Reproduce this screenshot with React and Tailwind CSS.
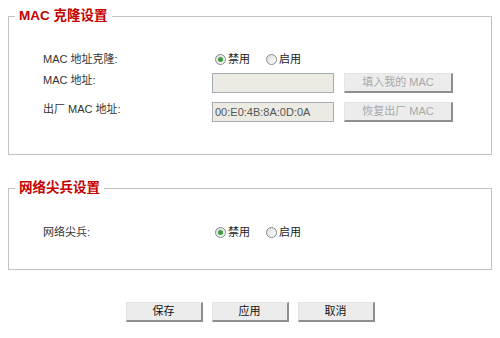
import React from "react";

const font = { fontFamily: '"Liberation Sans", Arial, "Noto Sans CJK SC", sans-serif' };

function Radio({ checked, label }) {
  return (
    <span className="flex items-center">
      <span className="flex h-[11px] w-[11px] items-center justify-center rounded-full border border-[#7f8a94] bg-gradient-to-br from-[#dcdcdc] to-white">
        {checked && <span className="h-[5px] w-[5px] rounded-full bg-[#3a9e3a]" />}
      </span>
      <span className="ml-[2px] text-[11px] leading-[14px] text-[#222]">{label}</span>
    </span>
  );
}

function GrayButton({ children, disabled, className = "" }) {
  return (
    <button
      disabled={disabled}
      className={`flex items-center justify-center border-t border-l border-t-[#e4e4e4] border-l-[#e4e4e4] border-r-2 border-b-2 border-r-[#8e8e8e] border-b-[#8e8e8e] bg-[#ececec] text-[11px] leading-none ${
        disabled ? "text-[#a8a8a8]" : "text-[#111]"
      } ${className}`}
    >
      {children}
    </button>
  );
}

function Section({ title, children, className = "", pt, pb }) {
  return (
    <fieldset className={`mx-2 border border-[#c2c2c2] ${className}`}>
      <legend className="ml-[6px] px-1 text-[13.5px] font-bold leading-4 text-[#c40000]">
        {title}
      </legend>
      <div className={`px-[34px] ${pt} ${pb}`}>{children}</div>
    </fieldset>
  );
}

export default function App() {
  return (
    <div className="h-[338px] w-[500px] overflow-hidden bg-white" style={font}>
      <div className="pt-2">
        <Section title="MAC 克隆设置" pt="pt-[21px]" pb="pb-[23px]">
          <div className="flex h-[28px] items-center">
            <span className="w-[169px] text-[11px] text-[#333]">MAC 地址克隆:</span>
            <span className="ml-[3px] flex items-center">
              <Radio checked label="禁用" />
              <span className="ml-[16px]">
                <Radio label="启用" />
              </span>
            </span>
          </div>
          <div className="flex h-[29px] items-start">
            <span className="w-[169px] text-[11px] leading-[14px] text-[#333]">MAC 地址:</span>
            <div className="h-[20px] w-[122px] border border-[#a5acb2] bg-[#ebebe4]" />
            <GrayButton disabled className="ml-[10px] h-[20px] w-[109px]">
              填入我的 MAC
            </GrayButton>
          </div>
          <div className="flex h-[29px] items-start">
            <span className="w-[169px] text-[11px] leading-[14px] text-[#333]">出厂 MAC 地址:</span>
            <div className="flex h-[20px] w-[122px] items-center border border-[#a5acb2] bg-[#ebebe4] px-[2px] text-[11px] text-[#555]">
              00:E0:4B:8A:0D:0A
            </div>
            <GrayButton disabled className="ml-[10px] h-[20px] w-[109px]">
              恢复出厂 MAC
            </GrayButton>
          </div>
        </Section>

        <Section title="网络尖兵设置" className="mt-[25px]" pt="pt-[22px]" pb="pb-[23px]">
          <div className="flex h-[28px] items-center">
            <span className="w-[169px] text-[11px] text-[#333]">网络尖兵:</span>
            <span className="ml-[3px] flex items-center">
              <Radio checked label="禁用" />
              <span className="ml-[16px]">
                <Radio label="启用" />
              </span>
            </span>
          </div>
        </Section>

        <div className="mt-[32px] flex justify-center gap-[9px]">
          <GrayButton className="h-[20px] w-[77px]">保存</GrayButton>
          <GrayButton className="h-[20px] w-[77px]">应用</GrayButton>
          <GrayButton className="h-[20px] w-[77px]">取消</GrayButton>
        </div>
      </div>
    </div>
  );
}
